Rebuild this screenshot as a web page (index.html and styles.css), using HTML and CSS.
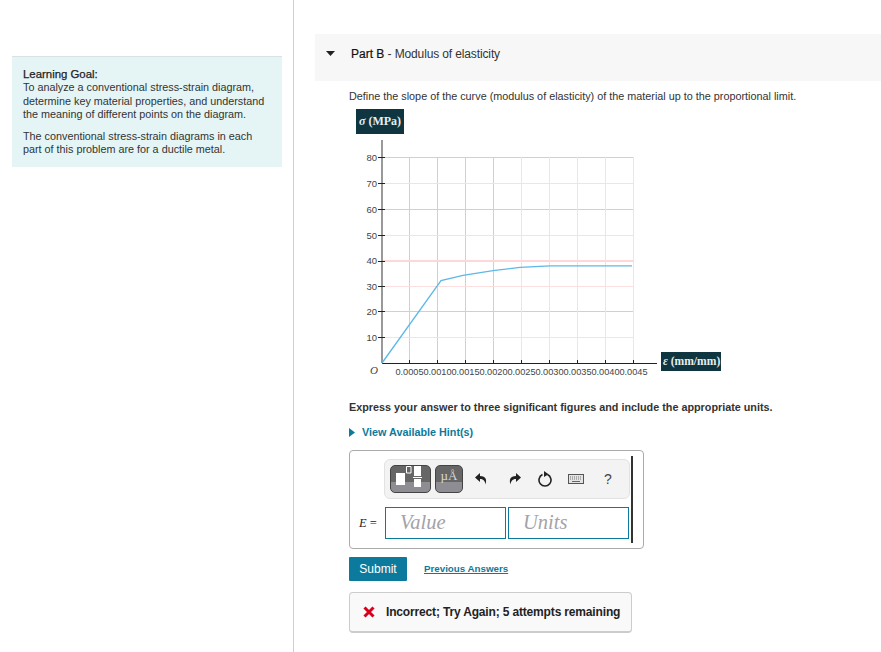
FILE: index.html
```html
<!DOCTYPE html>
<html lang="en">
<head>
<meta charset="utf-8">
<title>Part B - Modulus of elasticity</title>
<link rel="stylesheet" href="styles.css">
</head>
<body>
<aside class="sidebar">
  <section class="goal">
    <p class="goal-text"><span class="goal-title">Learning Goal:</span><br>To analyze a conventional stress-strain diagram, determine key material properties, and understand the meaning of different points on the diagram.</p>
    <p class="goal-text goal-second">The conventional stress-strain diagrams in each part of this problem are for a ductile metal.</p>
  </section>
</aside>
<main class="content">
  <header class="part-head">
    <svg class="caret" width="9" height="5" viewBox="0 0 9 5"><path d="M0 0H9L4.500 5Z" fill="#222"/></svg>
    <h2 class="part-title"><span class="part-name">Part B</span> - Modulus of elasticity</h2>
  </header>
  <div class="part-body">
    <p class="prompt">Define the slope of the curve (modulus of elasticity) of the material up to the proportional limit.</p>
    <div class="figure">
      <span class="axis-tag tag-y"><i>σ</i> (MPa)</span>
      <svg class="chart" width="320" height="270" viewBox="349 112 320 270">
        <g class="grid-major">
          <path d="M382 157.500H633M382 209.500H633M382 311.500H633M409.500 157V363M437.500 157V363M465.500 157V363M493.500 157V363"/>
        </g>
        <g class="grid-minor">
          <path d="M382 183.500H633M382 235.500H633M382 286.500H633M382 337.500H633M521.500 157V363M549.500 157V363M577.500 157V363M605.500 157V363M633.500 157V363"/>
        </g>
        <path class="grid-band" d="M382 261H633"/>
        <path class="axis-y" d="M382 140V363"/>
        <path class="axis-x" d="M382 363.500H657"/>
        <path class="ticks" d="M378 157.500H385M378 183.500H385M378 209.500H385M378 235.500H385M378 261.500H385M378 286.500H385M378 311.500H385M378 337.500H385M409.500 360V364M437.500 360V364M465.500 360V364M493.500 360V364M521.500 360V364M549.500 360V364M577.500 360V364M605.500 360V364M633.500 360V364"/>
        <path class="curve" d="M382 363L441 280.500L463 275.300L493 270.700L520 267.300L550 265.800H632"/>
        <g class="y-labels">
          <text x="377" y="161">80</text><text x="377" y="187">70</text><text x="377" y="213">60</text><text x="377" y="239">50</text><text x="377" y="264">40</text><text x="377" y="290">30</text><text x="377" y="315">20</text><text x="377" y="341">10</text>
        </g>
        <text class="origin" x="374" y="374">O</text>
        <g class="x-labels">
          <text x="409.500" y="375">0.0005</text><text x="437.500" y="375">0.0010</text><text x="465.500" y="375">0.0015</text><text x="493.500" y="375">0.0020</text><text x="521.500" y="375">0.0025</text><text x="549.500" y="375">0.0030</text><text x="577.500" y="375">0.0035</text><text x="605.500" y="375">0.0040</text><text x="633.500" y="375">0.0045</text>
        </g>
      </svg>
      <span class="axis-tag tag-x"><i>ε</i> (mm/mm)</span>
    </div>
    <p class="instruction">Express your answer to three significant figures and include the appropriate units.</p>
    <a class="hint" href="#"><svg width="6" height="9" viewBox="0 0 6 9"><path d="M0 0L6 4.500L0 9Z" fill="#0b7a9c"/></svg>View Available Hint(s)</a>
    <div class="answer-box">
      <div class="answer-inner">
        <div class="toolbar">
          <div class="tool-btn tool-wide">
            <svg width="39" height="26" viewBox="0 0 39 26"><path d="M5 7H14V19H5Z" fill="#fff"/><path d="M15.500 .5H20V7H15.500Z" fill="none" stroke="#fff"/><path d="M23 0H30V10H23ZM23 13H30V21H23Z" fill="#fff"/><path d="M22 11.500H31" stroke="#fff"/></svg>
          </div>
          <div class="tool-btn tool-unit">µÅ</div>
          <svg class="tool-icon" width="14" height="14" viewBox="0 0 14 14"><path d="M6 1L1 5.500L6 10V7C9 7 11 8.500 11.500 12.500C13 8 12 4 6 4Z" fill="#222"/></svg>
          <svg class="tool-icon icon-redo" width="14" height="14" viewBox="0 0 14 14"><path d="M8 1L13 5.500L8 10V7C5 7 3 8.500 2.500 12.500C1 8 2 4 8 4Z" fill="#222"/></svg>
          <svg class="tool-icon icon-reset" width="14" height="16" viewBox="0 0 14 16"><path d="M4.500 3.600A6 6 0 1 0 9.500 3.600" fill="none" stroke="#222" stroke-width="1.600"/><path d="M6 0L10.500 3.200L6 6Z" fill="#222"/></svg>
          <svg class="tool-icon icon-keys" width="16" height="10" viewBox="0 0 16 10"><rect x=".5" y=".5" width="15" height="9" fill="#e4e4e4" stroke="#555"/><path d="M2 3H14M2 5H14" stroke="#777" stroke-dasharray="1 1"/><path d="M4 7.500H12" stroke="#666"/></svg>
          <span class="tool-help">?</span>
        </div>
        <div class="fields">
          <span class="var-label"><i>E</i> =</span>
          <div class="field field-value">Value</div>
          <div class="field field-units">Units</div>
        </div>
      </div>
    </div>
    <div class="actions">
      <button class="submit" type="button">Submit</button>
      <a class="previous" href="#">Previous Answers</a>
    </div>
    <div class="feedback">
      <svg width="12" height="12" viewBox="0 0 12 12"><path d="M1.500 1.500L10.500 10.500M10.500 1.500L1.500 10.500" stroke="#d8001c" stroke-width="3"/></svg>
      <span>Incorrect; Try Again; 5 attempts remaining</span>
    </div>
  </div>
</main>
</body>
</html>
```
FILE: styles.css
```css
* { box-sizing: border-box; }
html, body { margin: 0; height: 100%; }
body {
  display: flex;
  height: 652px;
  overflow: hidden;
  background: #fff;
  color: #222;
  font-family: "Liberation Sans", Arial, sans-serif;
  font-size: 11px;
}
.sidebar {
  width: 294px;
  flex: none;
  padding: 56px 11px 0 12px;
  border-right: 1px solid #c9d0dc;
}
.goal {
  height: 111px;
  padding: 11px 11px 0;
  background: #e5f5f6;
  border-top: 1px solid #d9e2e4;
  color: #333;
}
.goal-text { margin: 0; font-size: 10.8px; line-height: 13.3px; }
.goal-title { font-size: 11.4px; color: #222; -webkit-text-stroke: .25px #222; }
.goal-second { margin-top: 9px; }
.content { flex: 1; min-width: 0; padding: 34px 0 0 21px; }
.part-head {
  display: flex;
  align-items: center;
  height: 47px;
  padding: 0 0 8px 11px;
  background: #f7f7f7;
}
.caret { margin-right: 16px; }
.part-title { margin: 0; font-size: 12px; font-weight: 400; letter-spacing: -.13px; color: #333; }
.part-name { letter-spacing: 0; color: #111; -webkit-text-stroke: .2px #111; }
.part-body { padding: 8px 0 0 34px; }
.prompt { margin: 0; font-size: 10.82px; line-height: 14px; color: #333; }
.figure { position: relative; width: 380px; height: 291px; margin-top: 6px; }
.chart { position: absolute; left: 0; top: 3px; }
.axis-tag {
  position: absolute;
  z-index: 1;
  background: #0f3640;
  color: #e8eeee;
  font-family: "Liberation Serif", "Times New Roman", serif;
  white-space: nowrap;
}
.tag-y { left: 7px; top: 0; width: 48px; height: 25px; line-height: 25px; font-size: 12px; font-weight: 700; text-align: center; }
.tag-x { left: 312px; top: 243px; width: 60px; height: 19px; padding-left: 2px; line-height: 19px; font-size: 11.6px; font-weight: 700; overflow: hidden; }
.grid-major path { fill: none; stroke: #f5c0c0; stroke-width: 1; }
.grid-minor path { fill: none; stroke: #fcdede; stroke-width: 1; }
.grid-band { fill: none; stroke: #fcd8d8; stroke-width: 2; }
.axis-y { fill: none; stroke: #777; stroke-width: 1.5; }
.axis-x { fill: none; stroke: #222; stroke-width: 1; }
.ticks { fill: none; stroke: #222; stroke-width: 1; }
.curve { fill: none; stroke: #5db8e6; stroke-width: 1.3; }
.y-labels text { font: 9.5px "Liberation Sans", Arial, sans-serif; fill: #444; text-anchor: end; }
.x-labels text { font: 9.2px "Liberation Sans", Arial, sans-serif; fill: #444; text-anchor: middle; }
.origin { font: italic 11px "Liberation Serif", serif; fill: #444; text-anchor: middle; }
.instruction { margin: 0; font-size: 10.8px; line-height: 14px; font-weight: 700; color: #333; }
.hint {
  display: flex;
  align-items: center;
  gap: 7px;
  margin-top: 11px;
  height: 14px;
  color: #0b7a9c;
  font-size: 10.8px;
  font-weight: 700;
  text-decoration: none;
}
.answer-box {
  width: 295px;
  height: 99px;
  margin-top: 11px;
  padding: 5px 0 0 9px;
  border: 1px solid #aaa;
  border-radius: 4px;
}
.answer-inner { width: 274px; height: 87px; padding-top: 3px; border-right: 2px solid #333; }
.toolbar {
  display: flex;
  align-items: center;
  width: 246px;
  height: 40px;
  margin-left: 25px;
  padding-left: 5px;
  background: #f3f3f3;
  border: 1px solid #e2e2e2;
  border-radius: 6px;
}
.tool-btn {
  height: 28px;
  border: 1px solid #444;
  border-radius: 5px;
  background: linear-gradient(#666 0 60%, #8d8d93 60% 100%);
}
.tool-wide { width: 41px; }
.tool-wide svg { display: block; }
.tool-unit {
  width: 28px;
  margin-left: 4px;
  color: #d8d8d8;
  font-family: "Liberation Serif", serif;
  font-size: 13px;
  line-height: 20px;
  text-align: center;
}
.tool-icon { margin-left: 11px; }
.icon-redo { margin-left: 20px; }
.icon-reset { margin-left: 16px; }
.icon-keys { margin-left: 16px; }
.tool-help { margin-left: 20px; font-size: 14px; color: #444; }
.fields { display: flex; align-items: center; margin-top: 8px; }
.var-label {
  width: 26px;
  font-family: "Liberation Serif", serif;
  font-size: 12.5px;
  color: #222;
  white-space: nowrap;
}
.field {
  height: 32px;
  border: 1px solid #0b7a9c;
  font-family: "Liberation Serif", serif;
  font-style: italic;
  font-size: 20.5px;
  line-height: 28px;
  color: #a3a3a8;
}
.field-value { width: 121px; padding-left: 14px; }
.field-units { width: 121px; margin-left: 2px; padding-left: 14px; }
.actions { display: flex; align-items: center; margin-top: 8px; }
.submit {
  width: 58px;
  height: 24px;
  padding: 0;
  border: 0;
  border-radius: 1px;
  background: #0b7a9c;
  color: #fff;
  font: 12px "Liberation Sans", Arial, sans-serif;
}
.previous { margin: 0 0 2px 17px; color: #0b7a9c; font-size: 9.75px; font-weight: 700; }
.feedback {
  display: flex;
  align-items: center;
  gap: 11px;
  width: 283px;
  height: 41px;
  margin-top: 11px;
  padding-left: 13px;
  background: #f9f9f9;
  border: 1px solid #ccc;
  border-bottom-width: 2px;
  border-radius: 4px;
  color: #222;
}
.feedback span { font-weight: 700; font-size: 12px; letter-spacing: -.16px; }
```
